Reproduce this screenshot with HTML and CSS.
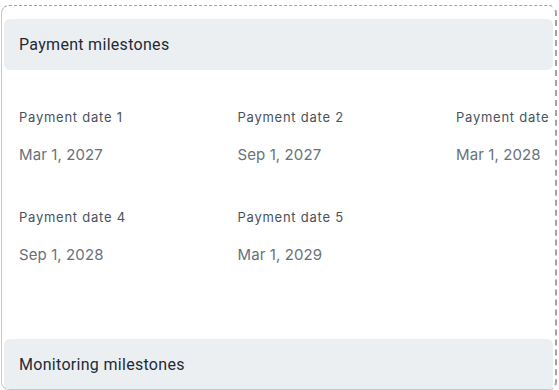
FILE: index.html
```html
<!DOCTYPE html>
<html lang="en">
<head>
<meta charset="utf-8">
<link rel="stylesheet" href="styles.css">
</head>
<body>
<div class="card">
  <div class="section-head">Payment milestones</div>
  <div class="fields">
    <div class="field"><div class="label">Payment date 1</div><div class="value">Mar 1, 2027</div></div>
    <div class="field"><div class="label">Payment date 2</div><div class="value">Sep 1, 2027</div></div>
    <div class="field"><div class="label">Payment date 3</div><div class="value">Mar 1, 2028</div></div>
    <div class="field"><div class="label">Payment date 4</div><div class="value">Sep 1, 2028</div></div>
    <div class="field"><div class="label">Payment date 5</div><div class="value">Mar 1, 2029</div></div>
  </div>
  <div class="section-head">Monitoring milestones</div>
</div>
</body>
</html>
```
FILE: styles.css
```css
html, body { margin: 0; padding: 0; background: #fff; }
body { width: 559px; height: 390px; overflow: hidden; }
.card {
  box-sizing: border-box;
  margin: 5px 2px 0 1px;
  height: 385px;
  border-left: 1px solid #c4c9ce;
  border-top: 1px dashed #9fa4a9;
  border-right: 2px dashed #9fa4a9;
  border-bottom: 1px solid #c4c9ce;
  border-radius: 8px;
  padding: 13px 2px 0 2px;
  overflow: hidden;
}
.section-head {
  height: 51px;
  display: flex;
  align-items: center;
  padding-left: 15px;
  background: #eceff2;
  border-radius: 6px;
  font-family: Roboto, "Open Sans", sans-serif;
  font-size: 16px;
  letter-spacing: 0.3px;
  color: #1e2a35;
}
.fields {
  height: 269px;
  box-sizing: border-box;
  padding: 38px 0 0 15px;
  display: grid;
  grid-template-columns: repeat(3, 218.5px);
  grid-auto-rows: 100px;
  align-content: start;
  overflow: hidden;
}
.field { white-space: nowrap; font-family: Inter, sans-serif; }
.label { font-size: 13px; line-height: 18px; letter-spacing: 0.75px; color: #48535e; }
.value { margin-top: 20px; font-size: 15px; line-height: 18px; letter-spacing: 0.1px; color: #68717b; }
```
